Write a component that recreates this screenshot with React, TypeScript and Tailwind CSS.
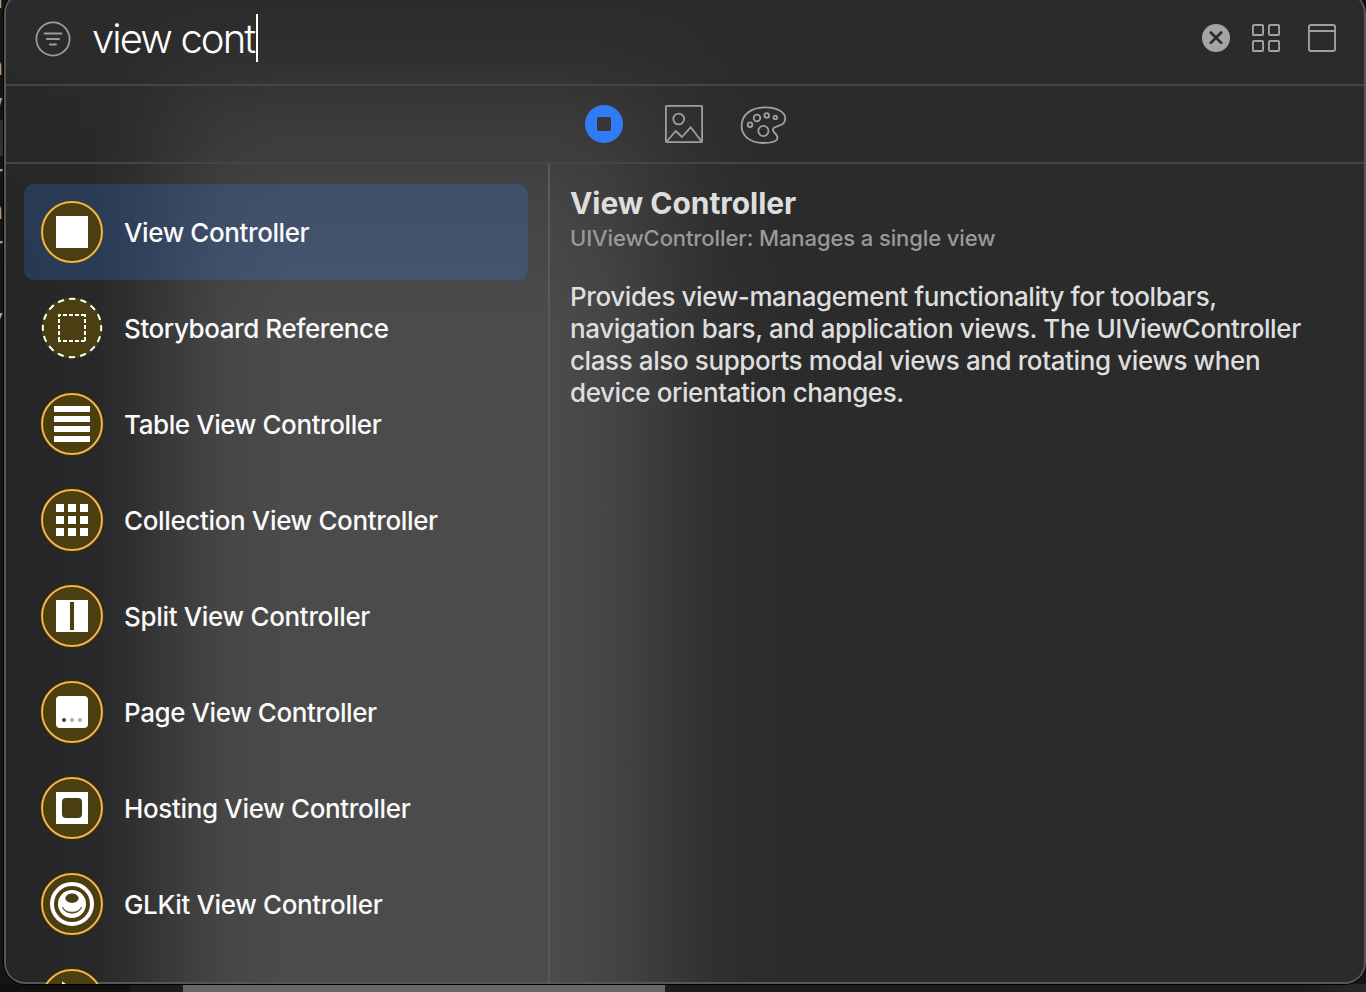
import React from "react";

const GOLD = "#f5b83d";
const OLIVE = "#4b3f12";

function Badge({ children, dashed = false }: { children?: React.ReactNode; dashed?: boolean }) {
  return (
    <svg className="size-[62px] shrink-0" viewBox="0 0 62 62">
      <circle cx="31" cy="31" r="30.5" fill={OLIVE} />
      {dashed ? (
        <circle cx="31" cy="31" r="29.2" fill="none" stroke="#fff" strokeWidth="2" strokeDasharray="6.2 5.267" strokeDashoffset="3.1" />
      ) : (
        <circle cx="31" cy="31" r="30" fill="none" stroke={GOLD} strokeWidth="2" />
      )}
      {children}
    </svg>
  );
}

const items = [
  {
    name: "View Controller",
    spacing: "tracking-[-0.4px]",
    icon: <Badge><rect x="15" y="15" width="32" height="32" fill="#fff" /></Badge>,
  },
  {
    name: "Storyboard Reference",
    spacing: "tracking-[-0.42px]",
    icon: (
      <Badge dashed>
        <path d="M17 18H45M17 44H45" stroke="#fff" strokeWidth="2" strokeDasharray="4 2" strokeDashoffset="1" />
        <path d="M18 17V45M44 17V45" stroke="#fff" strokeWidth="2" strokeDasharray="4 2" strokeDashoffset="1" />
      </Badge>
    ),
  },
  {
    name: "Table View Controller",
    spacing: "tracking-[-0.41px]",
    icon: <Badge><path d="M13 13h36v6H13zM13 23h36v6H13zM13 33h36v6H13zM13 43h36v6H13z" fill="#fff" /></Badge>,
  },
  {
    name: "Collection View Controller",
    spacing: "tracking-[-0.36px]",
    icon: (
      <Badge>
        {[15, 27, 39].map((y) => [15, 27, 39].map((x) => <rect key={`${x}-${y}`} x={x} y={y} width="8" height="8" fill="#fff" />))}
      </Badge>
    ),
  },
  {
    name: "Split View Controller",
    spacing: "tracking-[-0.33px]",
    icon: <Badge><rect x="15" y="15" width="32" height="32" fill="#fff" /><rect x="29" y="17" width="4" height="28" fill={OLIVE} /></Badge>,
  },
  {
    name: "Page View Controller",
    spacing: "tracking-[-0.41px]",
    icon: (
      <Badge>
        <rect x="15" y="15" width="32" height="32" rx="4" fill="#fff" />
        <circle cx="23" cy="39" r="2" fill={OLIVE} />
        <circle cx="31" cy="39" r="2" fill="#b7b29f" />
        <circle cx="39" cy="39" r="2" fill="#b7b29f" />
      </Badge>
    ),
  },
  {
    name: "Hosting View Controller",
    spacing: "tracking-[-0.35px]",
    icon: <Badge><rect x="15" y="15" width="32" height="32" fill="#fff" /><rect x="21" y="21" width="20" height="20" rx="4" fill={OLIVE} /></Badge>,
  },
  {
    name: "GLKit View Controller",
    spacing: "tracking-[-0.36px]",
    icon: (
      <Badge>
        <circle cx="31" cy="31" r="20" fill="none" stroke="#fff" strokeWidth="4" />
        <circle cx="31" cy="31" r="14" fill="#fff" />
        <ellipse cx="31" cy="25.3" rx="6.6" ry="4.7" fill={OLIVE} />
        <path d="M21.5 34C24 41 38 41 40.5 34C38.5 42.2 23.5 42.2 21.5 34Z" fill={OLIVE} stroke={OLIVE} strokeWidth="0.7" />
      </Badge>
    ),
  },
  {
    name: "",
    spacing: "",
    icon: <Badge><path d="M21 12.5L41 25L21 37Z" fill="#fff" /></Badge>,
  },
];

const slivers = [
  { ch: "n", top: "top-[-15px]" },
  { ch: "n", top: "top-[52px]" },
  { ch: "w", top: "top-[89px]" },
  { ch: "r", top: "top-[160px]" },
  { ch: "n", top: "top-[196px]" },
  { ch: "r", top: "top-[232px]" },
  { ch: "y", top: "top-[304px]" },
];

export default function App() {
  return (
    <div className="relative h-[992px] w-[1366px] overflow-hidden bg-[#151515] font-['Inter','Liberation_Sans',sans-serif] text-white antialiased">
      <div className="absolute inset-y-0 left-0 w-[3px] overflow-hidden">
        <div className="absolute top-[120px] h-9 w-[3px] bg-[#303030]" />
        {slivers.map((s, i) => (
          <span key={i} className={`absolute right-0 text-[25px] leading-[28px] text-[#a5a5a5] ${s.top}`}>{s.ch}</span>
        ))}
      </div>
      <div className="absolute bottom-0 left-0 flex h-[8px] w-full">
        <div className="w-[130px] bg-[#111]" />
        <div className="w-[53px] bg-[#1c1c1c]" />
        <div className="w-[482px] bg-[#686868]" />
        <div className="flex-1 bg-[linear-gradient(90deg,#1b1b1b_90%,#292929)]" />
      </div>

      <div className="absolute -top-[8px] left-[4px] flex h-[992px] w-[1362px] flex-col overflow-hidden rounded-[21px] bg-[linear-gradient(180deg,#2b2b2b_0px,#2b2b2bdd_60px,#2b2b2b80_130px,#2b2b2b38_210px,#2b2b2b00_330px),linear-gradient(90deg,#252525_0px,#282828_90px,#303030_130px,#3c3c3c_175px,#464646_220px,#4b4b4b_280px,#4b4b4b_550px,#464646_600px,#3c3c3c_650px,#323232_700px,#2d2d2d_740px,#2b2b2b_790px,#2b2b2b)] px-[2px] pt-[2px] shadow-[inset_0_0_0_2px_#565656,0_0_0_1px_#000]">
        <header className="flex h-[92px] shrink-0 items-center border-b-2 border-[#454545] pl-[29px] pr-[28px]">
          <svg className="size-[36px] shrink-0" viewBox="0 0 36 36" fill="none" stroke="#9b9b9b" strokeWidth="2">
            <circle cx="18" cy="18" r="16.6" strokeWidth="1.8" />
            <path d="M9.6 12.5H26.4M12 18H24M15 23.5H21" strokeLinecap="round" />
          </svg>
          <div className="mb-[2px] ml-[21px] flex items-center">
            <span className="w-[164px] whitespace-nowrap pt-px text-[40px] font-[350] leading-[48px] tracking-[-1.9px]">view cont</span>
            <span className="h-12 w-[2px] bg-white" />
          </div>
          <div className="mb-[2px] ml-auto flex items-center gap-[20px]">
            <svg className="size-[32px]" viewBox="0 0 32 32">
              <circle cx="16" cy="16" r="14" fill="#a4a4a4" />
              <path d="M10.8 10.5L21.2 20.9M21.2 10.5L10.8 20.9" stroke="#2b2b2b" strokeWidth="2.7" strokeLinecap="round" />
            </svg>
            <svg className="size-[28px]" viewBox="0 0 28 28" fill="none" stroke="#a0a0a0" strokeWidth="1.9">
              <rect x="0.95" y="0.95" width="10.1" height="10.1" rx="1" />
              <rect x="16.95" y="0.95" width="10.1" height="10.1" rx="1" />
              <rect x="0.95" y="16.95" width="10.1" height="10.1" rx="1" />
              <rect x="16.95" y="16.95" width="10.1" height="10.1" rx="1" />
            </svg>
            <svg className="ml-[8px] size-[28px]" viewBox="0 0 28 28" fill="none" stroke="#a0a0a0" strokeWidth="1.9">
              <rect x="0.95" y="0.95" width="26.1" height="26.1" rx="2" />
              <path d="M1 7H27" />
            </svg>
          </div>
        </header>

        <nav className="flex h-[78px] shrink-0 items-center border-b-2 border-[#454545] pl-[579px]">
          <svg className="size-[38px]" viewBox="0 0 38 38">
            <circle cx="19" cy="19" r="19" fill="#2f7cf6" />
            <rect x="12" y="12" width="14" height="14" rx="2" fill="#37373a" />
          </svg>
          <svg className="ml-[42px] size-[38px]" viewBox="0 0 38 38" fill="none" stroke="#9e9e9e" strokeWidth="1.8" strokeLinejoin="round">
            <rect x="0.9" y="0.9" width="36.2" height="36.2" rx="0.8" />
            <circle cx="13.7" cy="14" r="5.4" />
            <path d="M1.7 36.5L10.7 26L17 32L25.8 22.2L36.6 36.5" />
          </svg>
          <svg className="ml-[37px] h-[38px] w-[46px] overflow-visible" viewBox="0 0 46 38" fill="none" stroke="#a0a0a0" strokeWidth="1.8">
            <path d="M1.6 21C1.6 10 11 2.4 25 2.4C37 2.4 45.2 7 45.2 13.5C45.2 17.5 42.5 19.8 38.5 20.8C33.5 22 31.5 24.2 34 27C37.5 30.5 38.5 33 36.5 35.2C34 37.7 28.5 38 23.3 38C10 37.6 1.6 31 1.6 21Z" />
            <circle cx="10" cy="19.7" r="2.3" />
            <circle cx="17" cy="13" r="3.3" />
            <circle cx="26.7" cy="10.4" r="2.3" />
            <circle cx="35.3" cy="12.4" r="1.8" />
            <circle cx="23.4" cy="26" r="5.1" />
          </svg>
        </nav>

        <main className="flex min-h-0 flex-1">
          <div className="w-[544px] shrink-0 overflow-hidden border-r-2 border-[#5a5a5a] pl-[18px] pt-[20px]">
            {items.map((item, i) => (
              <div key={i} className={`flex h-24 w-[504px] items-center gap-[21px] rounded-[10px] pl-[17px] ${i === 0 ? "bg-[#357df8]/22" : ""}`}>
                {item.icon}
                <span className={`whitespace-nowrap pt-[2px] text-[26px] font-medium leading-8 text-[#fafafa] ${item.spacing}`}>{item.name}</span>
              </div>
            ))}
          </div>
          <section className="flex-1 whitespace-nowrap pl-[20px] pt-[21px] text-[#dedede]">
            <h1 className="text-[30px] font-bold leading-[36px] tracking-[-0.06px]">View Controller</h1>
            <p className="mt-[3px] text-[22px] font-medium leading-[28px] tracking-[-0.1px] text-[#9a9a9a]">UIViewController: Manages a single view</p>
            <div className="mt-[29px] text-[26px] font-[450] leading-8">
              <p className="tracking-[-0.41px]">Provides view-management functionality for toolbars,</p>
              <p className="tracking-[-0.4px]">navigation bars, and application views. The UIViewController</p>
              <p className="tracking-[-0.4px]">class also supports modal views and rotating views when</p>
              <p className="tracking-[-0.41px]">device orientation changes.</p>
            </div>
          </section>
        </main>
      </div>
    </div>
  );
}
